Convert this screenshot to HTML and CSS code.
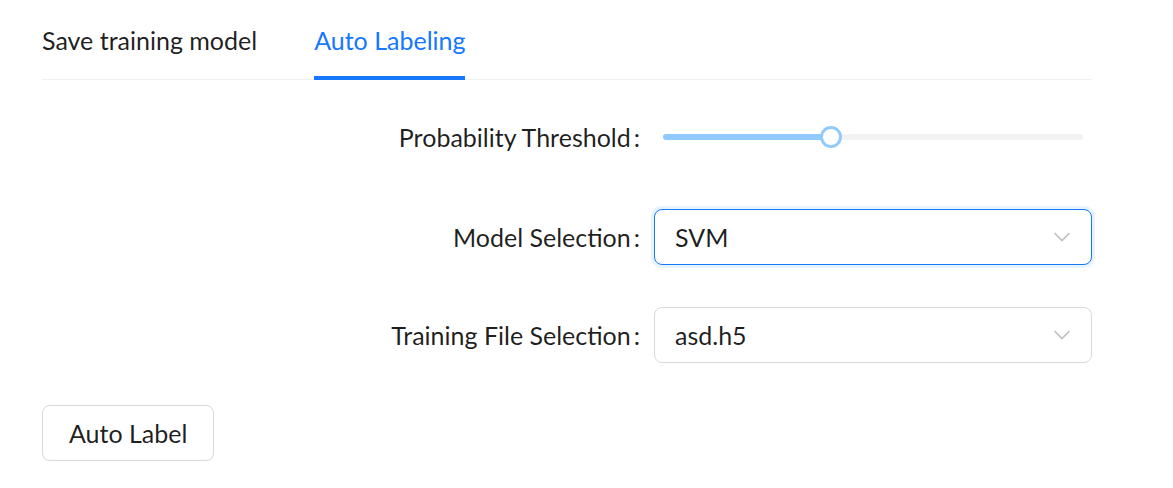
FILE: index.html
```html
<!DOCTYPE html>
<html>
<head>
<meta charset="utf-8">
<link rel="stylesheet" href="styles.css">
</head>
<body>
<div class="page">
  <div class="tabs">
    <div class="tab">Save training model</div>
    <div class="tab active">Auto Labeling<span class="ink"></span></div>
  </div>
  <div class="form">
    <div class="row row-slider">
      <div class="label">Probability Threshold<span class="colon">:</span></div>
      <div class="control">
        <div class="slider">
          <div class="rail"></div>
          <div class="track" style="width:40%"></div>
          <div class="handle" style="left:40%"></div>
        </div>
      </div>
    </div>
    <div class="row">
      <div class="label">Model Selection<span class="colon">:</span></div>
      <div class="control">
        <div class="select focused">
          <span class="value">SVM</span>
          <svg class="arrow" width="18" height="12" viewBox="0 0 18 12"><path d="M1.5 2 L9 9.5 L16.5 2" fill="none" stroke="#bfbfbf" stroke-width="1.6"/></svg>
        </div>
      </div>
    </div>
    <div class="row">
      <div class="label">Training File Selection<span class="colon">:</span></div>
      <div class="control">
        <div class="select">
          <span class="value">asd.h5</span>
          <svg class="arrow" width="18" height="12" viewBox="0 0 18 12"><path d="M1.5 2 L9 9.5 L16.5 2" fill="none" stroke="#bfbfbf" stroke-width="1.6"/></svg>
        </div>
      </div>
    </div>
  </div>
  <button class="btn">Auto Label</button>
</div>
</body>
</html>
```

FILE: styles.css
```css
* { box-sizing: border-box; }
body {
  margin: 0;
  background: #fff;
  font-family: "Lato", "Open Sans", sans-serif;
  font-size: 25px;
  color: rgba(0,0,0,0.88);
}
.page {
  padding: 0 81px 0 42px;
}
.tabs {
  display: flex;
  gap: 57px;
  height: 80px;
  border-bottom: 1px solid #f0f0f0;
  align-items: stretch;
}
.tab {
  position: relative;
  display: flex;
  align-items: center;
  color: rgba(0,0,0,0.88);
  white-space: nowrap;
}
.tab.active { color: #1677ff; }
.ink {
  position: absolute;
  left: 0;
  right: 0;
  bottom: -1px;
  height: 4px;
  background: #1677ff;
}
.form {
  display: flex;
  flex-direction: column;
  gap: 42px;
  padding-top: 29px;
}
.row {
  display: grid;
  grid-template-columns: 612px 1fr;
  height: 56px;
  align-items: center;
}
.row-slider { margin-bottom: 2px; }
.label {
  text-align: right;
  padding-right: 14px;
  white-space: nowrap;
}
.colon { margin-left: 3px; }
.control { height: 56px; display: flex; align-items: center; }
.slider {
  position: relative;
  width: 100%;
  height: 24px;
  margin: 0 9px;
}
.rail {
  position: absolute;
  left: 0; right: 0; top: 9px;
  height: 6px;
  border-radius: 3px;
  background: #f2f2f2;
}
.track {
  position: absolute;
  left: 0; top: 9px;
  height: 6px;
  border-radius: 3px;
  background: #91caff;
}
.handle {
  position: absolute;
  top: 1px;
  width: 22px;
  height: 22px;
  margin-left: -11px;
  border-radius: 50%;
  background: #fff;
  border: 3px solid #91caff;
}
.select {
  width: 100%;
  height: 56px;
  border: 1px solid #d9d9d9;
  border-radius: 8px;
  display: flex;
  align-items: center;
  justify-content: space-between;
  padding: 0 20px 0 20px;
  background: #fff;
}
.select.focused {
  border-color: #1677ff;
  box-shadow: 0 0 0 3px rgba(5,145,255,0.1);
}
.value { color: rgba(0,0,0,0.88); }
.btn {
  margin-top: 42px;
  height: 56px;
  padding: 0 26px;
  font-family: inherit;
  font-size: 25px;
  color: rgba(0,0,0,0.88);
  background: #fff;
  border: 1px solid #d9d9d9;
  border-radius: 8px;
  box-shadow: 0 2px 0 rgba(0,0,0,0.02);
}
```
